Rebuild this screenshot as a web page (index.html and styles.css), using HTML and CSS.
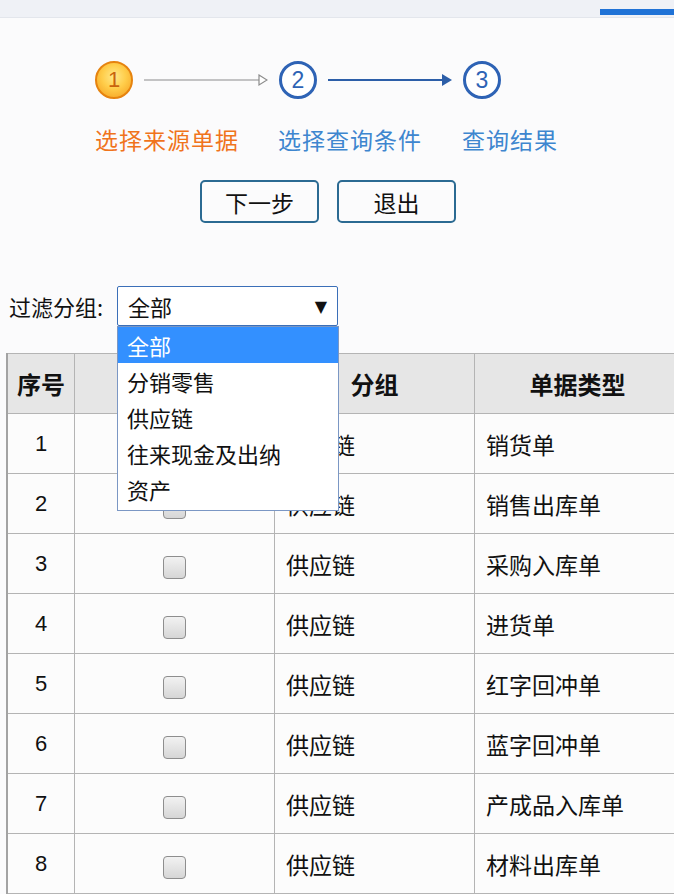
FILE: index.html
```html
<!DOCTYPE html>
<html lang="zh-CN">
<head>
    <meta charset="UTF-8">
    <meta name="viewport" content="width=device-width, initial-scale=1.0">
    <title>选择来源单据</title>
    <link rel="stylesheet" href="styles.css">
</head>
<body>
    <div class="topbar"><span class="topbar-tab"></span></div>

    <div class="steps">
        <div class="step-row">
            <span class="circle circle-active">1</span>
            <svg class="arrow" width="124" height="14" viewBox="0 0 124 14">
                <line x1="0" y1="7" x2="117" y2="7" stroke="#8c8c8c" stroke-width="1.2"/>
                <polygon points="115,2 123,7 115,12" fill="#fff" stroke="#8c8c8c" stroke-width="1.2"/>
            </svg>
            <span class="circle">2</span>
            <svg class="arrow" width="124" height="14" viewBox="0 0 124 14">
                <line x1="0" y1="7" x2="115" y2="7" stroke="#2c5ea8" stroke-width="2"/>
                <polygon points="114,1 124,7 114,13" fill="#2c5ea8"/>
            </svg>
            <span class="circle">3</span>
        </div>
        <div class="label-row">
            <span class="step-label step-label-active">选择来源单据</span>
            <span class="step-label">选择查询条件</span>
            <span class="step-label">查询结果</span>
        </div>
    </div>

    <div class="actions">
        <button class="btn">下一步</button>
        <button class="btn">退出</button>
    </div>

    <div class="filter">
        <span class="filter-label">过滤分组:</span>
        <div class="select-wrap">
            <div class="select">
                <span>全部</span>
                <span class="select-arrow">▼</span>
            </div>
            <ul class="options">
                <li class="selected">全部</li>
                <li>分销零售</li>
                <li>供应链</li>
                <li>往来现金及出纳</li>
                <li>资产</li>
            </ul>
        </div>
    </div>

    <table class="grid">
        <thead>
            <tr>
                <th class="col-no">序号</th>
                <th class="col-check"></th>
                <th class="col-group">分组</th>
                <th class="col-type">单据类型</th>
            </tr>
        </thead>
        <tbody>
            <tr><td class="num">1</td><td class="check"><span class="box"></span></td><td>供应链</td><td>销货单</td></tr>
            <tr><td class="num">2</td><td class="check"><span class="box"></span></td><td>供应链</td><td>销售出库单</td></tr>
            <tr><td class="num">3</td><td class="check"><span class="box"></span></td><td>供应链</td><td>采购入库单</td></tr>
            <tr><td class="num">4</td><td class="check"><span class="box"></span></td><td>供应链</td><td>进货单</td></tr>
            <tr><td class="num">5</td><td class="check"><span class="box"></span></td><td>供应链</td><td>红字回冲单</td></tr>
            <tr><td class="num">6</td><td class="check"><span class="box"></span></td><td>供应链</td><td>蓝字回冲单</td></tr>
            <tr><td class="num">7</td><td class="check"><span class="box"></span></td><td>供应链</td><td>产成品入库单</td></tr>
            <tr><td class="num">8</td><td class="check"><span class="box"></span></td><td>供应链</td><td>材料出库单</td></tr>
        </tbody>
    </table>
</body>
</html>
```

FILE: styles.css
```css
body {
    margin: 0;
    width: 674px;
    height: 894px;
    overflow: hidden;
    background-color: #fbfbfc;
    font-family: "Noto Sans CJK SC", "Liberation Sans", sans-serif;
    color: #111;
}
.topbar {
    height: 17px;
    background-color: #eff1f6;
    border-bottom: 1px solid #e3e6ec;
    display: flex;
    justify-content: flex-end;
    align-items: flex-start;
}
.topbar-tab {
    margin-top: 9px;
    width: 74px;
    height: 6px;
    background-color: #1f72d6;
}
.steps {
    padding: 43px 0 0 95px;
}
.step-row {
    display: flex;
    align-items: center;
}
.circle {
    width: 38px;
    height: 38px;
    box-sizing: border-box;
    border: 3px solid #2e63b5;
    border-radius: 50%;
    background-color: #fff;
    color: #2e63b5;
    font-family: "Liberation Sans", sans-serif;
    font-size: 23px;
    display: flex;
    align-items: center;
    justify-content: center;
}
.circle-active {
    border: 2px solid #e6830f;
    background: radial-gradient(circle at 50% 40%, #ffe98a 0%, #ffcd4a 45%, #f49a1a 100%);
    color: #c9630d;
    font-size: 22px;
}
.arrow {
    margin: 0 11px;
}
.label-row {
    display: grid;
    grid-template-columns: 183px 184px 184px;
    margin-top: 25px;
}
.step-label {
    font-size: 23px;
    letter-spacing: 1px;
    color: #3e86cf;
    line-height: 30px;
}
.step-label-active {
    color: #f0741c;
}
.actions {
    display: flex;
    gap: 18px;
    padding-left: 200px;
    margin-top: 26px;
}
.btn {
    width: 119px;
    height: 43px;
    background-color: #fbfbfc;
    border: 2px solid #2b6a92;
    border-radius: 5px;
    font-family: "Noto Sans CJK SC", sans-serif;
    font-size: 23px;
    color: #111;
    padding: 0;
}
.filter {
    display: flex;
    align-items: center;
    margin-top: 63px;
    padding-left: 9px;
}
.filter-label {
    font-size: 22px;
    width: 108px;
}
.select-wrap {
    position: relative;
}
.select {
    width: 221px;
    height: 40px;
    box-sizing: border-box;
    border: 1px solid #3b6fb8;
    border-radius: 2px;
    background-color: #fff;
    display: flex;
    align-items: center;
    justify-content: space-between;
    padding: 0 10px 0 10px;
    font-size: 22px;
}
.select-arrow {
    font-size: 16px;
    font-family: "DejaVu Sans", sans-serif;
}
.options {
    position: absolute;
    top: 40px;
    left: 0;
    width: 220px;
    margin: 0;
    padding: 0 0 3px 0;
    list-style: none;
    background-color: #fff;
    border: 1px solid #7b97c4;
    z-index: 2;
}
.options li {
    height: 36px;
    line-height: 36px;
    padding-left: 9px;
    font-size: 22px;
}
.options li.selected {
    background-color: #3390ff;
    color: #fff;
}
.grid {
    margin: 27px 0 0 6px;
    width: 669px;
    border-collapse: collapse;
    table-layout: fixed;
    border-left: 2px solid #a3a3a3;
}
.grid th,
.grid td {
    height: 59px;
    border: 1px solid #b4b4b4;
    padding: 0 0 0 11px;
    font-size: 23px;
    text-align: left;
    font-weight: normal;
}
.grid th {
    background-color: #e6e6e6;
    font-weight: bold;
    text-align: center;
    padding: 0;
    font-size: 24px;
}
.grid td {
    background-color: #fcfcfc;
}
.grid td:first-child,
.grid th:first-child {
    border-left: 2px solid #a3a3a3;
}
.col-no { width: 66px; }
.col-check { width: 199px; }
.col-group { width: 199px; }
.col-type { width: 205px; }
.grid td.num {
    text-align: center;
    padding: 0;
    font-family: "Liberation Sans", sans-serif;
    font-size: 22px;
}
.grid td.check {
    text-align: center;
    padding: 0;
}
.box {
    display: inline-block;
    width: 21px;
    height: 21px;
    border: 1px solid #8e8e8e;
    border-radius: 4px;
    background: linear-gradient(#f2f2f2, #d6d6d6);
    vertical-align: middle;
}
```
